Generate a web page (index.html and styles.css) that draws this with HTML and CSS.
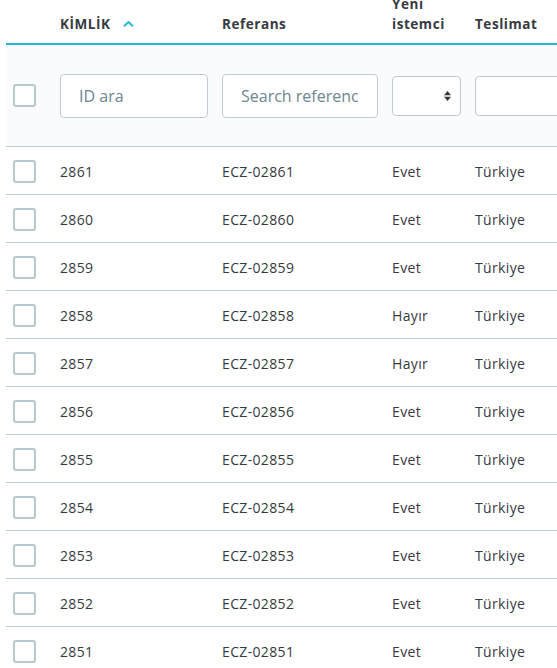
FILE: index.html
```html
<!DOCTYPE html>
<html lang="tr">
<head>
<meta charset="utf-8">
<title>Siparişler</title>
<link rel="stylesheet" href="styles.css">
</head>
<body>
<div class="grid-wrap">
<table class="grid">
  <colgroup>
    <col class="c-check"><col class="c-id"><col class="c-ref"><col class="c-new"><col class="c-ship">
  </colgroup>
  <thead>
    <tr class="head">
      <th></th>
      <th><span class="sortable">KİMLİK<svg class="sort-icon" width="11" height="6" viewBox="0 0 11 6"><polyline points="1,5.2 5.5,1 10,5.2" fill="none" stroke="#25b9d7" stroke-width="2"/></svg></span></th>
      <th>Referans</th>
      <th>Yeni istemci</th>
      <th>Teslimat</th>
    </tr>
    <tr class="filters">
      <td><input type="checkbox" class="check"></td>
      <td><input type="text" class="field" placeholder="ID ara"></td>
      <td><input type="text" class="field" placeholder="Search reference"></td>
      <td><div class="select-box"><select class="select"><option></option></select><svg class="caret" width="7" height="10" viewBox="0 0 7 10"><polygon points="3.5,0 7,4.2 0,4.2" fill="#363a41"/><polygon points="0,5.8 7,5.8 3.5,10" fill="#363a41"/></svg></div></td>
      <td><div class="select-box"><select class="select"><option></option></select><svg class="caret" width="7" height="10" viewBox="0 0 7 10"><polygon points="3.5,0 7,4.2 0,4.2" fill="#363a41"/><polygon points="0,5.8 7,5.8 3.5,10" fill="#363a41"/></svg></div></td>
    </tr>
  </thead>
  <tbody>
    <tr><td><input type="checkbox" class="check"></td><td>2861</td><td>ECZ-02861</td><td>Evet</td><td>Türkiye</td></tr>
    <tr><td><input type="checkbox" class="check"></td><td>2860</td><td>ECZ-02860</td><td>Evet</td><td>Türkiye</td></tr>
    <tr><td><input type="checkbox" class="check"></td><td>2859</td><td>ECZ-02859</td><td>Evet</td><td>Türkiye</td></tr>
    <tr><td><input type="checkbox" class="check"></td><td>2858</td><td>ECZ-02858</td><td>Hayır</td><td>Türkiye</td></tr>
    <tr><td><input type="checkbox" class="check"></td><td>2857</td><td>ECZ-02857</td><td>Hayır</td><td>Türkiye</td></tr>
    <tr><td><input type="checkbox" class="check"></td><td>2856</td><td>ECZ-02856</td><td>Evet</td><td>Türkiye</td></tr>
    <tr><td><input type="checkbox" class="check"></td><td>2855</td><td>ECZ-02855</td><td>Evet</td><td>Türkiye</td></tr>
    <tr><td><input type="checkbox" class="check"></td><td>2854</td><td>ECZ-02854</td><td>Evet</td><td>Türkiye</td></tr>
    <tr><td><input type="checkbox" class="check"></td><td>2853</td><td>ECZ-02853</td><td>Evet</td><td>Türkiye</td></tr>
    <tr><td><input type="checkbox" class="check"></td><td>2852</td><td>ECZ-02852</td><td>Evet</td><td>Türkiye</td></tr>
    <tr><td><input type="checkbox" class="check"></td><td>2851</td><td>ECZ-02851</td><td>Evet</td><td>Türkiye</td></tr>
  </tbody>
</table>
</div>
</body>
</html>
```

FILE: styles.css
```css
html, body {
  margin: 0;
  padding: 0;
  background: #ffffff;
  overflow: hidden;
}

body {
  font-family: "Open Sans", "DejaVu Sans", sans-serif;
  color: #363a41;
  font-size: 14px;
}

.grid-wrap {
  padding-left: 6px;
  margin-top: -16px;
}

.grid {
  table-layout: fixed;
  border-collapse: separate;
  border-spacing: 0;
  width: 582px;
}

.c-check { width: 47px; }
.c-id { width: 162px; }
.c-ref { width: 170px; }
.c-new { width: 83px; }
.c-ship { width: 120px; }

.head th {
  text-align: left;
  vertical-align: bottom;
  font-weight: 700;
  font-size: 13.5px;
  letter-spacing: 0.55px;
  line-height: 20px;
  padding: 10px 7px 9px;
  border-bottom: 2px solid #25b9d7;
  white-space: normal;
}

.sortable {
  display: inline-flex;
  align-items: center;
  gap: 12px;
}

.sort-icon {
  display: block;
}

.filters td {
  background: #fafbfc;
  height: 101px;
  padding: 0 7px;
  border-bottom: 1px solid #bbcdd2;
  vertical-align: middle;
}

.check {
  -webkit-appearance: none;
  appearance: none;
  display: block;
  width: 23px;
  height: 23px;
  margin: 0;
  box-sizing: border-box;
  border: 2px solid #b7c9ce;
  border-radius: 3px;
  background: #fff;
}

.field {
  display: block;
  box-sizing: border-box;
  width: 100%;
  height: 44px;
  margin: 0;
  padding: 0 19px 0 18px;
  border: 1px solid #bbcdd2;
  border-radius: 4px;
  background: #fff;
  font-family: "Open Sans", "DejaVu Sans", sans-serif;
  font-size: 16px;
  color: #363a41;
}

.field::placeholder {
  color: #6c868e;
  opacity: 1;
}

.select-box {
  position: relative;
  height: 40px;
}

.select {
  -webkit-appearance: none;
  appearance: none;
  display: block;
  box-sizing: border-box;
  width: 100%;
  height: 40px;
  margin: 0;
  border: 1px solid #bbcdd2;
  border-radius: 4px;
  background: #fff;
}

.caret {
  position: absolute;
  right: 10px;
  top: 15px;
  pointer-events: none;
}

tbody td {
  box-sizing: border-box;
  height: 48px;
  padding: 2px 7px 0;
  border-bottom: 1px solid #bbcdd2;
  vertical-align: middle;
  white-space: nowrap;
  font-size: 14px;
  letter-spacing: 0.35px;
  line-height: 20px;
}
```
